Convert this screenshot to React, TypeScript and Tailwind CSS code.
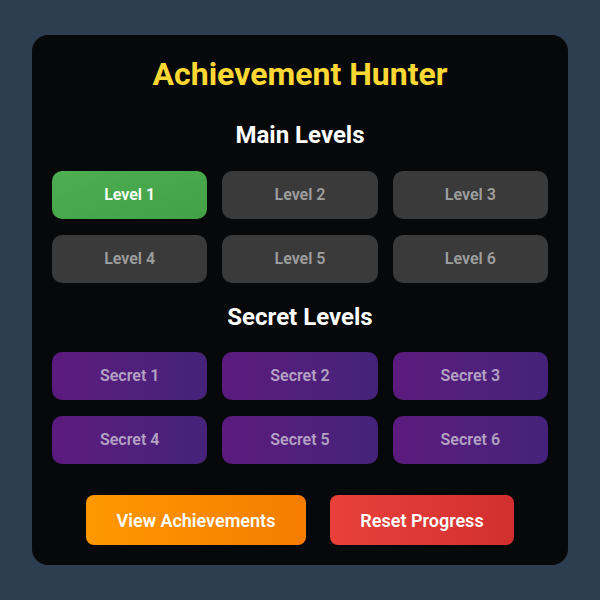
export default function App() {
  const levels = [1, 2, 3, 4, 5, 6];
  return (
    <div
      className="w-[600px] h-[600px] bg-[#2c3e50] flex items-center justify-center"
      style={{ fontFamily: "Roboto, 'Liberation Sans', sans-serif" }}
    >
      <div className="w-[536px] h-[530px] bg-[#070809] rounded-[16px] px-5 pt-[19px] flex flex-col items-center">
        <h1 className="text-[32px] leading-[40px] font-bold text-[#fdd835]">Achievement Hunter</h1>
        <h2 className="mt-[25px] text-[24px] leading-[32px] font-bold text-white">Main Levels</h2>
        <div className="mt-[20px] w-full grid grid-cols-3 gap-x-[15px] gap-y-[16px]">
          {levels.map((n) => (
            <div
              key={n}
              className={
                n === 1
                  ? "h-[48px] rounded-[10px] bg-gradient-to-br from-[#4caf50] to-[#43a047] text-white flex items-center justify-center text-[16px] font-semibold"
                  : "h-[48px] rounded-[10px] bg-[#3a3a3b] text-[#9e9e9e] flex items-center justify-center text-[16px] font-semibold"
              }
            >
              Level {n}
            </div>
          ))}
        </div>
        <h2 className="mt-[18px] text-[24px] leading-[32px] font-bold text-white">Secret Levels</h2>
        <div className="mt-[19px] w-full grid grid-cols-3 gap-x-[15px] gap-y-[16px]">
          {levels.map((n) => (
            <div
              key={n}
              className="h-[48px] rounded-[10px] bg-gradient-to-r from-[#5c1a7e] to-[#45237a] text-[#b3a2c3] flex items-center justify-center text-[16px] font-semibold"
            >
              Secret {n}
            </div>
          ))}
        </div>
        <div className="mt-[31px] flex gap-[24px]">
          <div className="w-[220px] h-[50px] rounded-[8px] bg-gradient-to-r from-[#ff9800] to-[#f57c00] text-white flex items-center justify-center text-[18px] font-semibold">
            View Achievements
          </div>
          <div className="w-[184px] h-[50px] rounded-[8px] bg-gradient-to-r from-[#e8413b] to-[#d32f2f] text-white flex items-center justify-center text-[18px] font-semibold">
            Reset Progress
          </div>
        </div>
      </div>
    </div>
  );
}
